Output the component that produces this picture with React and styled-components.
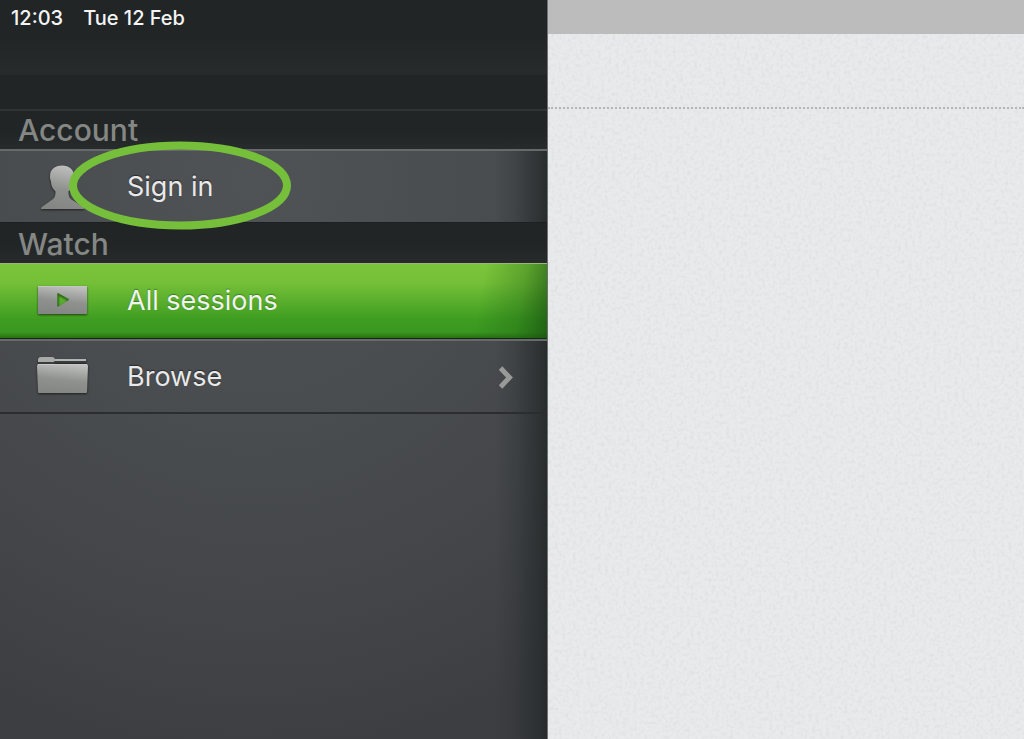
import React from "react";
import styled, { createGlobalStyle, css } from "styled-components";

const GlobalStyle = createGlobalStyle`
  *, *::before, *::after { box-sizing: border-box; }
  body {
    margin: 0;
    background: #e8e9eb;
    font-family: Inter, "Liberation Sans", sans-serif;
  }
`;

const Layout = styled.div`
  display: grid;
  grid-template-columns: minmax(0, 548px) minmax(0, 1fr);
  min-height: 100vh;
`;

/* The first layer is the shade that falls on the menu from the page beside it */
const Sidebar = styled.aside`
  display: flex;
  flex-direction: column;
  border-right: 1px solid #6f7173;
  background:
    linear-gradient(to right, rgba(38, 43, 44, 0), rgba(38, 43, 44, 0.25) 40%, rgba(38, 43, 44, 0.75) 85%, rgba(34, 39, 40, 0.85)) right / 52px 100% no-repeat,
    radial-gradient(ellipse 560px 580px at 46% 180px, #505356 0%, #4a4d50 40%, #434548 75%, rgba(61, 62, 66, 0) 100%),
    #3d3e42;
`;

const StatusBar = styled.header`
  display: flex;
  gap: 20px;
  height: 36px;
  padding: 0 11px;
  background: #212526;
  color: #f4f4f4;
  font-size: 20px;
  font-weight: 500;
  line-height: 36px;
`;

const NavBar = styled.div`
  height: 73px;
  background: linear-gradient(to bottom, #212526 0, #272b2c 38px, #212526 39px);
`;

const SectionTitle = styled.h2`
  height: ${(p) => (p.$ruled ? 40 : 41)}px;
  margin: 0;
  padding: 0 18px;
  border-top: ${(p) => (p.$ruled ? "2px solid #303435" : "1px solid #1d2021")};
  background: linear-gradient(to bottom, #212526 55%, #272b2c);
  color: #858784;
  font-size: 30px;
  font-weight: 500;
  line-height: ${(p) => (p.$ruled ? 38 : 42)}px;
`;

const Menu = styled.ul`
  margin: 0;
  padding: 0;
  list-style: none;
`;

const MenuEntry = styled.li`
  position: relative;
`;

const MenuButton = styled.button`
  display: flex;
  align-items: center;
  width: 100%;
  height: ${(p) => (p.$last ? 75 : 73)}px;
  padding: 0 32px 0 36px;
  border: 0;
  border-top: 2px solid #67696a;
  border-bottom: ${(p) => (p.$last ? "2px solid #2b2d2f" : "0")};
  background: transparent;
  color: #e9e9e9;
  font: 400 27px/40px Inter, "Liberation Sans", sans-serif;
  text-align: left;
  text-shadow: 0 -1px 1px #26292a;
  cursor: pointer;
  ${(p) =>
    p.$active &&
    css`
      height: 76px;
      border-top: 1px solid #9bb87c;
      border-bottom: 1px solid #142a12;
      background:
        linear-gradient(100deg, rgba(32, 100, 20, 0) 20%, rgba(32, 100, 20, 0.35) 65%, rgba(24, 80, 16, 0.75)) right / 80px 100% no-repeat,
        linear-gradient(to bottom, #7cc53b 0%, #75c038 25%, #3e9d21 75%, #3a9720 92%, #277012 100%);
      color: #f2f2f2;
      text-shadow: 0 -1px 1px #37811f;
    `}
`;

const IconSlot = styled.span`
  flex: 0 0 52px;
  height: 48px;
  margin-right: 39px;
  svg {
    display: block;
    filter: drop-shadow(0 1px 1px rgba(0, 0, 0, 0.6));
  }
`;

const Label = styled.span`
  flex: 1;
`;

const Highlight = styled.svg`
  position: absolute;
  top: -8px;
  left: 68px;
  pointer-events: none;
`;

const Page = styled.main`
  position: relative;
  display: flex;
  flex-direction: column;
  background: #e9eaec;
`;

const PageStatus = styled.div`
  position: relative;
  height: 34px;
  background: #bcbcbd;
`;

const PageHeader = styled.div`
  position: relative;
  height: 75px;
  border-bottom: 2px dotted #b4b5b7;
`;

const Paper = styled.svg`
  position: absolute;
  inset: 0;
  width: 100%;
  height: 100%;
  pointer-events: none;
`;

const IconShade = () => (
  <defs>
    <linearGradient id="metal" x1="0.6" y1="0" x2="0.4" y2="1">
      <stop offset="0" stopColor="#bfc0bf" />
      <stop offset="0.55" stopColor="#8f918e" />
      <stop offset="1" stopColor="#848683" />
    </linearGradient>
  </defs>
);

const PersonIcon = () => (
  <svg width="52" height="48" viewBox="0 0 52 48" aria-hidden="true">
    <IconShade />
    <path
      fill="url(#metal)"
      d="M26 2.500c-7.500 0-12 4-12 11 0 2 .3 3 1 5 0 4 1.500 7 4.500 10 0 5-1 7-4.500 9L6.500 43.500c-1 .6-1.500 1.400-1.500 2.500h43c0-1.100-.5-1.900-1.500-2.500L37 37.500c-3.500-2-4.500-4-4.500-9 3-3 4.500-6 4.500-10 .7-2 1-3 1-5C38 6.500 33.500 2.500 26 2.500z"
    />
  </svg>
);

const VideoIcon = () => (
  <svg width="52" height="48" viewBox="0 0 52 48" aria-hidden="true">
    <IconShade />
    <path fill="url(#metal)" fillRule="evenodd" d="M2 9h49v28H2zM21.500 16v14L33 23z" />
    <path fill="none" stroke="#2f7f1d" d="M22 29V16.500L33 22.500" />
    <path fill="none" stroke="#c4c6c2" d="M2 9.500h49" />
  </svg>
);

const FolderIcon = () => (
  <svg width="52" height="48" viewBox="0 0 52 48" aria-hidden="true">
    <IconShade />
    <path fill="#a9aba8" d="M2 9V7q0-3 3-3h11q3 0 3 3v2z" />
    <path fill="none" stroke="#b4b6b3" strokeWidth="2" d="M19 7h31" />
    <path fill="none" stroke="#3a3d3f" strokeWidth="2" d="M3 10h15l1-1h31" />
    <path fill="url(#metal)" d="M1 13q0-2 2-2h46q3 0 3 2l-1 26q0 1-1 1H3q-1 0-1-1z" />
    <path fill="none" stroke="#c9cac8" d="M2 11.500h49" />
  </svg>
);

const Chevron = () => (
  <svg width="16" height="24" viewBox="0 0 16 24" aria-hidden="true">
    <path fill="none" stroke="#989a97" strokeWidth="5" d="M1.500 3L10.500 12.500 1.500 22" />
  </svg>
);

export default function App() {
  return (
    <>
      <GlobalStyle />
      <Layout>
        <Sidebar>
          <StatusBar>
            <time>12:03</time>
            <span>Tue 12 Feb</span>
          </StatusBar>
          <NavBar />
          <nav aria-label="Main menu">
            <SectionTitle $ruled>Account</SectionTitle>
            <Menu>
              <MenuEntry>
                <MenuButton type="button">
                  <IconSlot><PersonIcon /></IconSlot>
                  <Label>Sign in</Label>
                </MenuButton>
                <Highlight width="224" height="90" viewBox="0 0 224 90" aria-hidden="true">
                  <ellipse cx="112" cy="44.500" rx="107" ry="40" fill="none" stroke="#76bf3b" strokeWidth="8" />
                </Highlight>
              </MenuEntry>
            </Menu>
            <SectionTitle>Watch</SectionTitle>
            <Menu>
              <MenuEntry>
                <MenuButton $active type="button" aria-current="page">
                  <IconSlot><VideoIcon /></IconSlot>
                  <Label>All sessions</Label>
                </MenuButton>
              </MenuEntry>
              <MenuEntry>
                <MenuButton $last type="button">
                  <IconSlot><FolderIcon /></IconSlot>
                  <Label>Browse</Label>
                  <Chevron />
                </MenuButton>
              </MenuEntry>
            </Menu>
          </nav>
        </Sidebar>
        <Page>
          <Paper aria-hidden="true">
            <filter id="grain" x="0" y="0" width="100%" height="100%">
              <feTurbulence type="fractalNoise" baseFrequency="0.28" numOctaves="3" seed="4" />
              <feColorMatrix values="0 0 0 0 0.45  0 0 0 0 0.46  0 0 0 0 0.48  0.4 0 0 0 -0.17" />
            </filter>
            <rect width="100%" height="100%" filter="url(#grain)" />
          </Paper>
          <PageStatus />
          <PageHeader />
        </Page>
      </Layout>
    </>
  );
}
